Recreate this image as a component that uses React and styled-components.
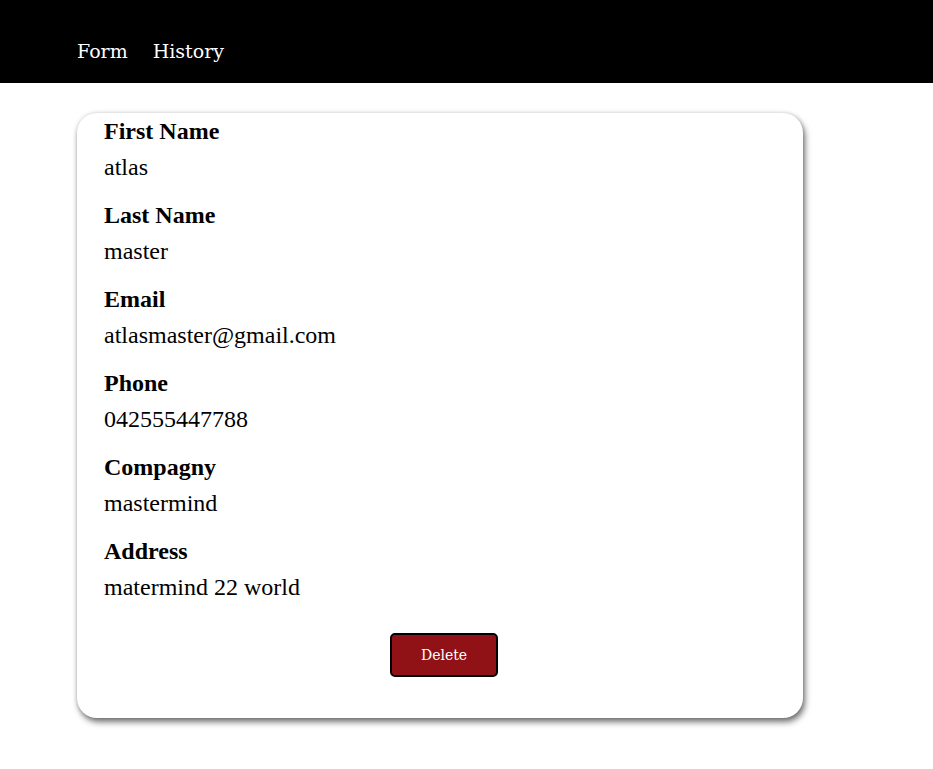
import styled, { createGlobalStyle } from "styled-components";

const GlobalStyle = createGlobalStyle`
  body {
    margin: 0;
    background: #fff;
    font-family: "Liberation Serif", "Times New Roman", serif;
  }
`;

const contact = [
  { label: "First Name", value: "atlas" },
  { label: "Last Name", value: "master" },
  { label: "Email", value: "atlasmaster@gmail.com" },
  { label: "Phone", value: "042555447788" },
  { label: "Compagny", value: "mastermind" },
  { label: "Address", value: "matermind 22 world" },
];

const App = () => {
  return (
    <>
      <GlobalStyle />
      <Navbar>
        <NavLink>Form</NavLink>
        <NavLink>History</NavLink>
      </Navbar>
      <Main>
        <Card>
          {contact.map((item) => (
            <Field key={item.label}>
              <Label>{item.label}</Label>
              <Value>{item.value}</Value>
            </Field>
          ))}
          <ButtonRow>
            <DeleteButton>Delete</DeleteButton>
          </ButtonRow>
        </Card>
      </Main>
    </>
  );
};

export default App;

const Navbar = styled.nav`
  height: 83px;
  background: #000;
  display: flex;
  align-items: center;
  gap: 25px;
  padding: 18px 0 0 77px;
  box-sizing: border-box;
`;

const NavLink = styled.a`
  color: #fff;
  font-family: "DejaVu Serif", Georgia, serif;
  font-size: 19px;
  cursor: pointer;
`;

const Main = styled.main`
  padding: 30px 0 40px 77px;
`;

const Card = styled.div`
  width: 726px;
  box-sizing: border-box;
  padding: 0 27px 41px;
  border-radius: 20px;
  background: #fff;
  box-shadow: 2px 4px 6px rgba(0, 0, 0, 0.55), 0 0 4px rgba(0, 0, 0, 0.15);
`;

const Field = styled.div`
  margin-bottom: 12px;
`;

const Label = styled.div`
  font-size: 24px;
  font-weight: bold;
  line-height: 36px;
  color: #000;
`;

const Value = styled.div`
  font-size: 24px;
  line-height: 36px;
  color: #000;
`;

const ButtonRow = styled.div`
  display: flex;
  justify-content: center;
  padding-top: 16px;
  padding-left: 8px;
`;

const DeleteButton = styled.button`
  width: 108px;
  height: 44px;
  background: #911216;
  color: #fff;
  border: 2px solid #000;
  border-radius: 5px;
  font-family: "DejaVu Serif", Georgia, serif;
  font-size: 14px;
  cursor: pointer;
`;
